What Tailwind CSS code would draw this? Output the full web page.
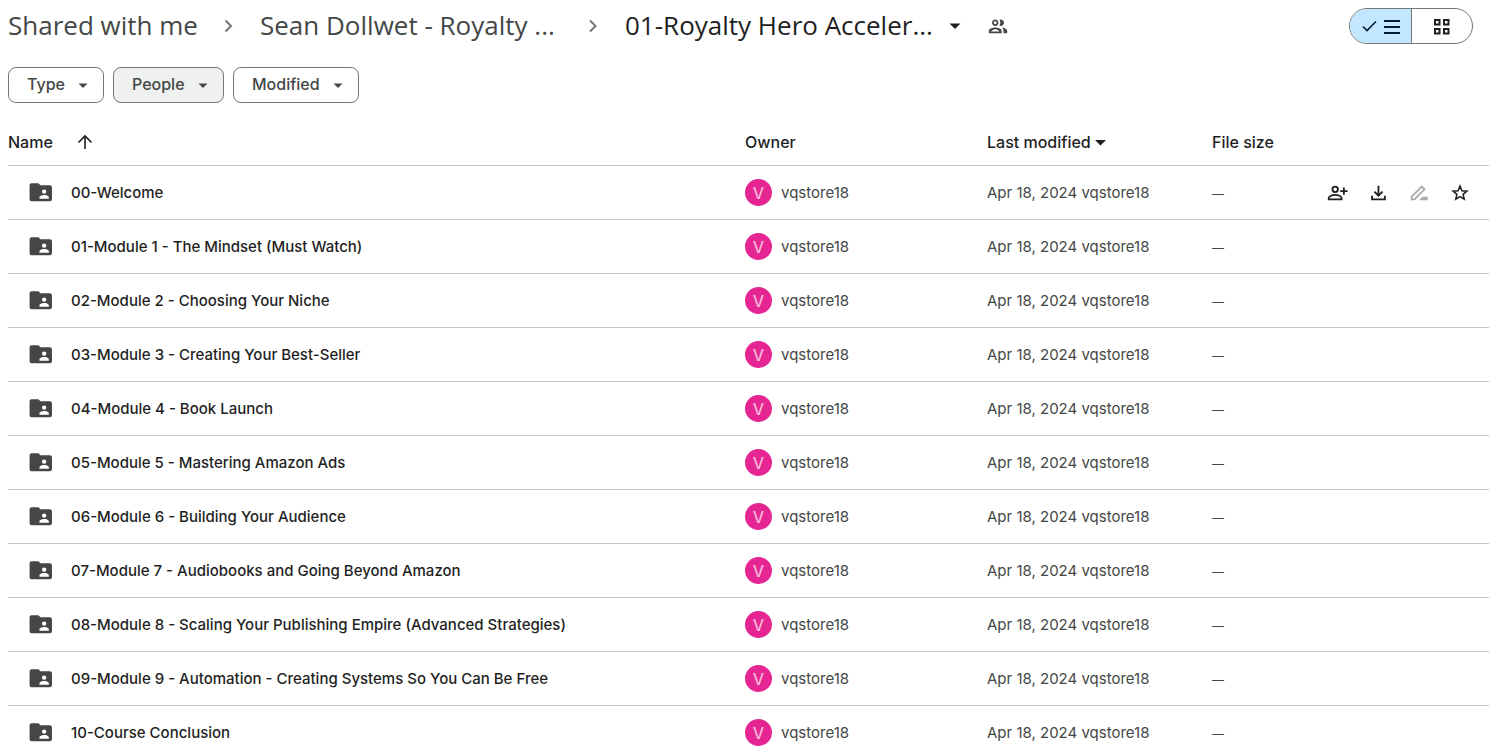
<!DOCTYPE html>
<html lang="en">
<head>
  <meta charset="UTF-8" />
  <meta name="viewport" content="width=device-width, initial-scale=1.0" />
  <title>01-Royalty Hero Accelerator</title>
  <script src="https://cdn.jsdelivr.net/npm/@tailwindcss/browser@4"></script>
</head>
<body class="h-screen overflow-hidden bg-white font-['Inter','Roboto',sans-serif] text-[#1f1f1f]">
  <!-- Breadcrumb -->
  <header class="flex items-center justify-between pt-2 pr-4 pl-2">
    <nav aria-label="Breadcrumb" class="flex h-9 items-center pb-[2px] font-['Open_Sans','Roboto',sans-serif] text-[26px] whitespace-nowrap text-[#444746]">
      <a href="#" class="w-[188px]">Shared with me</a>
      <svg class="mx-5 size-6" viewBox="0 0 24 24" fill="none" stroke="#747775" stroke-width="2"><path d="M9.500 7.500l5.500 5.500-5.500 5.500" /></svg>
      <a href="#" class="w-[297px]">Sean Dollwet - Royalty ...</a>
      <svg class="mr-5 ml-6 size-6" viewBox="0 0 24 24" fill="none" stroke="#747775" stroke-width="2"><path d="M9 7.500l5.500 5.500L9 18.500" /></svg>
      <button type="button" class="flex items-center text-[#1f1f1f]">
        <span class="w-[311px] text-left">01-Royalty Hero Acceler...</span>
        <svg class="ml-[7px] size-6" viewBox="0 0 24 24" fill="currentColor"><path d="M6.500 10.500l5.500 5.500 5.500-5.500z" /></svg>
      </button>
      <button type="button" aria-label="Manage access" class="ml-5">
        <svg class="size-[22px]" viewBox="0 0 24 24" fill="#444746"><path d="M9 14.750c-2.340 0-7 1.170-7 3.500V21h14v-2.750c0-2.330-4.660-3.500-7-3.500zM4.340 19c.84-.58 2.870-2.250 4.660-2.250s3.820 1.670 4.660 2.250zM9 13c1.930 0 3.500-1.570 3.500-3.500S10.930 6 9 6 5.500 7.570 5.500 9.500 7.070 13 9 13zm0-5c.83 0 1.500.67 1.500 1.500S9.830 11 9 11s-1.500-.67-1.500-1.500S8.170 8 9 8zm7.040 6.810c1.160.84 1.960 1.960 1.960 3.440V21h4v-2.750c0-2.020-3.500-3.170-5.960-3.440zM15 13c1.930 0 3.500-1.570 3.500-3.500S16.930 6 15 6c-.54 0-1.040.13-1.500.35.63.89 1 1.980 1 3.150s-.37 2.260-1 3.150c.46.22.96.35 1.500.35z" /></svg>
      </button>
    </nav>

    <div class="flex h-9 w-[124px] overflow-hidden rounded-full border border-[#747775]">
      <button type="button" aria-label="List layout" aria-pressed="true" class="flex flex-1 items-center justify-center gap-1 border-r border-[#747775] bg-[#c2e7ff] text-[#001d35]">
        <svg class="size-[18px]" viewBox="0 0 18 18" fill="none" stroke="currentColor" stroke-width="1.6"><path d="M3 9.500l4 4 9-9" /></svg>
        <svg class="size-[18px]" viewBox="0 0 18 18" fill="currentColor"><path d="M2 3h16v2H2zM2 9h16v2H2zM2 15h16v2H2z" /></svg>
      </button>
      <button type="button" aria-label="Grid layout" aria-pressed="false" class="flex flex-1 items-center justify-center">
        <svg class="size-[18px]" viewBox="0 0 18 18" fill="none" stroke="currentColor" stroke-width="2"><path d="M2 3h4.500v4.500H2zM11 3h4.500v4.500H11zM2 12h4.500v4.500H2zM11 12h4.500v4.500H11z" /></svg>
      </button>
    </div>
  </header>

  <!-- Filters -->
  <div class="flex gap-[9px] pt-[23px] pl-2 text-[#444746]">
    <div class="relative">
      <select aria-label="Type" class="h-9 w-24 appearance-none rounded-lg border border-[#747775] px-[18px] pb-[2px] text-base font-medium">
        <option>Type</option>
      </select>
      <svg class="pointer-events-none absolute top-2 right-[11px] size-5" viewBox="0 0 20 20" fill="currentColor"><path d="M5.500 8.500h9L10 13z" /></svg>
    </div>
    <div class="relative">
      <select aria-label="People" class="h-9 w-[111px] appearance-none rounded-lg border border-[#747775] bg-[#eff1f0] px-[18px] pb-[2px] text-base font-medium">
        <option>People</option>
      </select>
      <svg class="pointer-events-none absolute top-2 right-[11px] size-5" viewBox="0 0 20 20" fill="currentColor"><path d="M5.500 8.500h9L10 13z" /></svg>
    </div>
    <div class="relative">
      <select aria-label="Modified" class="h-9 w-[126px] appearance-none rounded-lg border border-[#747775] px-[18px] pb-[2px] text-base font-medium">
        <option>Modified</option>
      </select>
      <svg class="pointer-events-none absolute top-2 right-[11px] size-5" viewBox="0 0 20 20" fill="currentColor"><path d="M5.500 8.500h9L10 13z" /></svg>
    </div>
  </div>

  <!-- File list -->
  <main class="pt-4 pl-2">
    <table class="w-full table-fixed border-separate border-spacing-0 text-left text-[15px] leading-6 whitespace-nowrap">
      <thead class="text-base">
        <tr class="h-[47px] *:border-b *:border-[#c7c7c7] *:p-0 *:font-medium">
          <th scope="col">
            <button type="button" class="flex items-center gap-[22px]">
              Name
              <svg class="size-5" viewBox="0 0 20 20" fill="none" stroke="currentColor" stroke-width="1.6"><path d="M10 17V4.500M3.500 10.500L10 4l6.500 6.500" /></svg>
            </button>
          </th>
          <th scope="col" class="w-[242px]">Owner</th>
          <th scope="col" class="w-[225px]">
            <button type="button" class="flex items-center">
              Last modified
              <svg class="size-5" viewBox="0 0 20 20" fill="currentColor"><path d="M4 8h11l-5.500 5.500z" /></svg>
            </button>
          </th>
          <th scope="col" class="w-[105px]">File size</th>
          <th scope="col" class="w-[172px]" aria-label="Actions"></th>
        </tr>
      </thead>
      <tbody id="fileList"></tbody>
    </table>
  </main>

  <template id="rowActions">
    <div class="flex items-center justify-end gap-[19px] pr-[18px] text-[#1f1f1f]">
      <button type="button" aria-label="Share">
        <svg class="size-[22px]" viewBox="0 0 24 24" fill="none" stroke="currentColor" stroke-width="2"><circle cx="10" cy="8" r="3" /><path d="M3 19v-1.500c0-2 4-3.500 7-3.500s7 1.500 7 3.500V19zM19.500 6v8M15.500 10h8" /></svg>
      </button>
      <button type="button" aria-label="Download">
        <svg class="size-[22px]" viewBox="0 0 24 24" fill="none" stroke="currentColor" stroke-width="2"><path d="M12.500 4v11M8 10.500l4.500 4.500 4.500-4.500M5.500 15v4h14v-4" /></svg>
      </button>
      <button type="button" aria-label="Rename" disabled class="text-[#aaaaaa]">
        <svg class="size-[22px]" viewBox="0 0 24 24" fill="none" stroke="currentColor" stroke-width="2"><path d="M4 19v-3L15 5l3 3L7 19z" /><path d="M12 20l4-4h5.500v4z" fill="currentColor" stroke="none" /></svg>
      </button>
      <button type="button" aria-label="Add to starred">
        <svg class="size-[22px]" viewBox="0 0 24 24" fill="none" stroke="currentColor" stroke-width="1.7"><path d="M12 4.500l2.100 5 5.400.5-4.100 3.500 1.200 5.300-4.600-2.800-4.600 2.800 1.200-5.300L4.500 10l5.400-.5z" /></svg>
      </button>
    </div>
  </template>

  <script>
    const folders = [
      '00-Welcome',
      '01-Module 1 - The Mindset (Must Watch)',
      '02-Module 2 - Choosing Your Niche',
      '03-Module 3 - Creating Your Best-Seller',
      '04-Module 4 - Book Launch',
      '05-Module 5 - Mastering Amazon Ads',
      '06-Module 6 - Building Your Audience',
      '07-Module 7 - Audiobooks and Going Beyond Amazon',
      '08-Module 8 - Scaling Your Publishing Empire (Advanced Strategies)',
      '09-Module 9 - Automation - Creating Systems So You Can Be Free',
      '10-Course Conclusion'
    ];

    const list = document.getElementById('fileList');
    folders.forEach((name, i) => {
      const row = document.createElement('tr');
      row.className = 'h-[54px] *:border-b *:border-[#c7c7c7] *:p-0 text-[#444746]';
      row.innerHTML = `
        <td>
          <a href="#" class="flex items-center gap-[18px] pl-5 font-medium text-[#1f1f1f]">
            <svg class="size-[25px]" viewBox="0 0 24 24" fill="#444746"><path d="M21 5h-9l-2-2H3.500A2 2 0 0 0 1.500 5v13.500a2 2 0 0 0 2 2H21a2 2 0 0 0 2-2V7a2 2 0 0 0-2-2zM15.500 9a2.100 2.100 0 1 1 0 4.200 2.100 2.100 0 0 1 0-4.200zM20 18h-9v-1.200c0-1.500 3-2.300 4.500-2.300s4.500.8 4.500 2.300z" /></svg>
            <span>${name}</span>
          </a>
        </td>
        <td>
          <div class="flex items-center gap-[9px]">
            <span class="flex size-[27px] items-center justify-center rounded-full bg-[#e52592] text-base leading-6 font-medium text-[#f9b5da]">V</span>
            <span>vqstore18</span>
          </div>
        </td>
        <td>Apr 18, 2024 <span>vqstore18</span></td>
        <td><span class="text-xs">—</span></td>
        <td></td>`;
      if (i === 0) {
        row.lastElementChild.appendChild(document.getElementById('rowActions').content.cloneNode(true));
      }
      list.appendChild(row);
    });
  </script>
</body>
</html>
